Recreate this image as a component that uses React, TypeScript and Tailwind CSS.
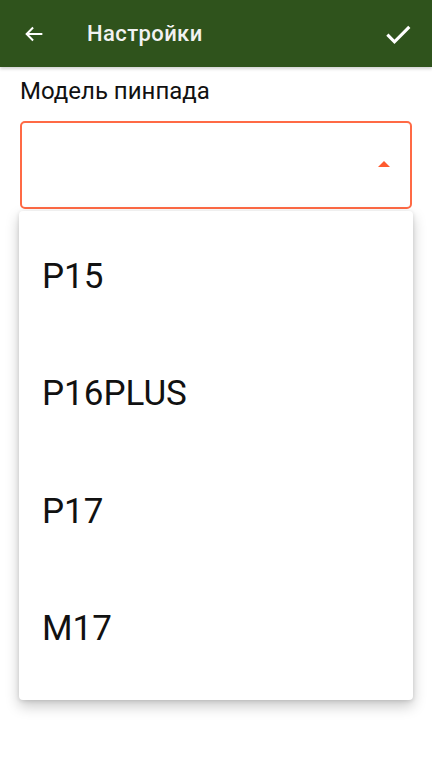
import React from 'react';

const models = ['P15', 'P16PLUS', 'P17', 'M17'];

export default function App() {
  return (
    <div
      className="relative w-[432px] h-[775px] bg-white overflow-hidden"
      style={{ fontFamily: 'Roboto, "Noto Sans", sans-serif' }}
    >
      {/* Toolbar */}
      <div className="h-[67px] bg-[#2f531c] flex items-center shadow-[0_2px_3px_rgba(0,0,0,0.18)] relative z-10">
        <button className="w-[68px] h-full flex items-center justify-center text-white">
          <svg width="22" height="22" viewBox="0 0 24 24" fill="none" stroke="white" strokeWidth="2.2" strokeLinecap="square">
            <path d="M20 12H5" />
            <path d="M11 5l-7 7 7 7" strokeLinecap="butt" />
          </svg>
        </button>
        <div className="flex-1 text-[#f2f2f2] text-[22px] font-medium pl-[19px] tracking-[0.4px]">Настройки</div>
        <button className="w-[68px] h-full flex items-center justify-center">
          <svg width="34" height="34" viewBox="0 0 24 24" fill="none" stroke="white" strokeWidth="2.2">
            <path d="M4.5 12.5l5 5L20 7" />
          </svg>
        </button>
      </div>

      <div className="px-5 pt-[10px]">
        <div className="text-[24px] text-[#111] leading-[28px]">Модель пинпада</div>
        <div className="mt-[16px] h-[88px] border-2 border-[#ff6a45] rounded-[5px] flex items-center justify-end pr-[20px]">
          <svg width="12" height="6" viewBox="0 0 12 6" className="mt-[-3px]">
            <path d="M0 6L6 0l6 6z" fill="#ff5a2e" />
          </svg>
        </div>
      </div>

      {/* Dropdown popup */}
      <div className="absolute left-[19px] top-[211px] w-[394px] bg-white rounded-[4px] shadow-[0_6px_14px_rgba(0,0,0,0.22),0_1px_4px_rgba(0,0,0,0.12)] pt-[7px] pb-[12px]">
        {models.map((m) => (
          <div key={m} className="h-[117.5px] flex items-center pl-[23px] text-[35px] text-[#111]">
            {m}
          </div>
        ))}
      </div>
    </div>
  );
}
